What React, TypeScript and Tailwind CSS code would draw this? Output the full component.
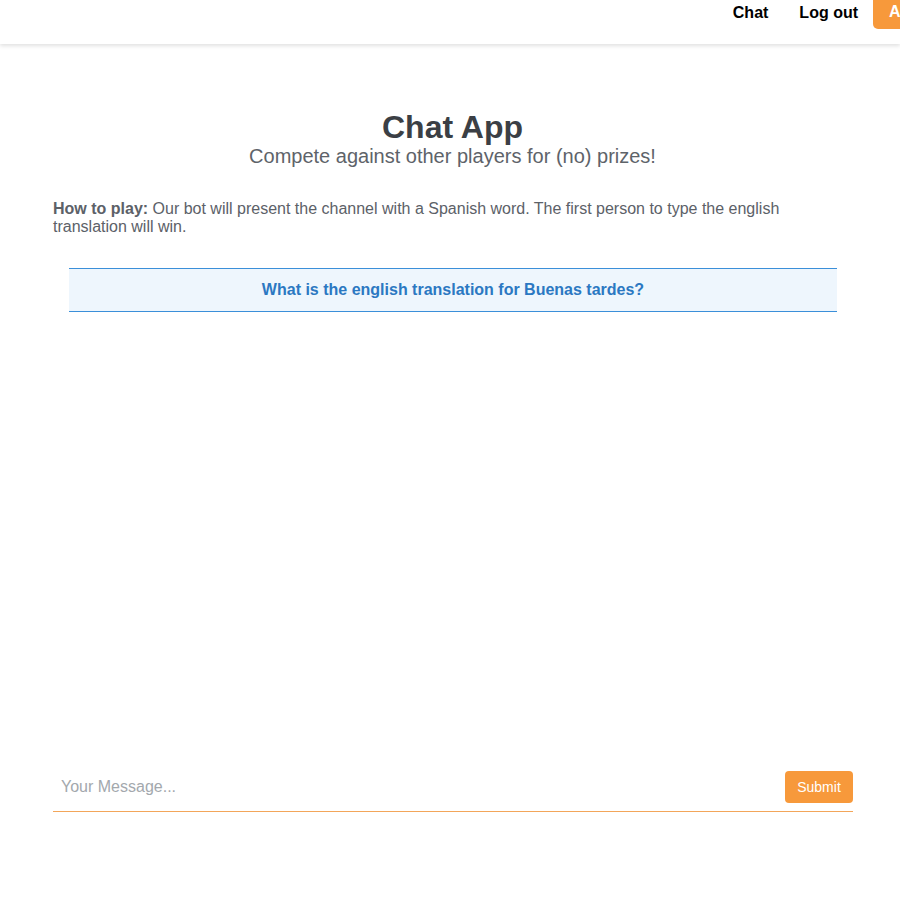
const App = () => {
  return (
    <div className="min-h-[900px] bg-white font-['Liberation_Sans',Arial,sans-serif]">
      <nav className="h-11 flex justify-end items-start shadow-[0_2px_4px_rgba(0,0,0,0.12)] overflow-hidden">
        <a className="text-[16px] font-bold text-black mt-[4px] leading-[18px] shrink-0">Chat</a>
        <a className="text-[16px] font-bold text-black mt-[4px] leading-[18px] ml-[31px] shrink-0">Log out</a>
        <div className="ml-[15px] -mr-[53px] shrink-0 h-[29px] w-[80px] bg-[#f7993b] rounded-b-[5px] pl-[16px] pt-[3px] text-white font-bold text-[16px] leading-[18px]">
          Admin
        </div>
      </nav>

      <main className="w-[800px] ml-[53px]">
        <div className="text-center pt-[66px] -ml-[1px]">
          <h1 className="text-[32px] font-bold text-[#3b3f45] leading-[34px]">Chat App</h1>
          <p className="text-[20px] text-[#5e6369] leading-[24px]">
            Compete against other players for (no) prizes!
          </p>
        </div>

        <p className="mt-[32px] text-[16px] leading-[18px] text-[#5c6168]">
          <b>How to play:</b> Our bot will present the channel with a Spanish word. The first person to type the english
          translation will win.
        </p>

        <div className="mt-[32px] mx-[16px] h-[44px] border-y border-[#3b8fd9] bg-[#eef6fd] flex items-center justify-center">
          <span className="text-[16px] font-bold text-[#2b78c2]">
            What is the english translation for Buenas tardes?
          </span>
        </div>

        <div className="h-[459px]" />

        <form className="flex items-center border-b border-[#f3a65a] pb-[8px]" onSubmit={(e) => e.preventDefault()}>
          <input
            className="flex-1 text-[16px] px-[8px] outline-none placeholder:text-[#a3a8ad] text-[#333]"
            placeholder="Your Message..."
          />
          <button className="bg-[#f7993b] text-white text-[14px] rounded-[4px] w-[68px] h-[32px]">
            Submit
          </button>
        </form>
      </main>
    </div>
  );
};

export default App
